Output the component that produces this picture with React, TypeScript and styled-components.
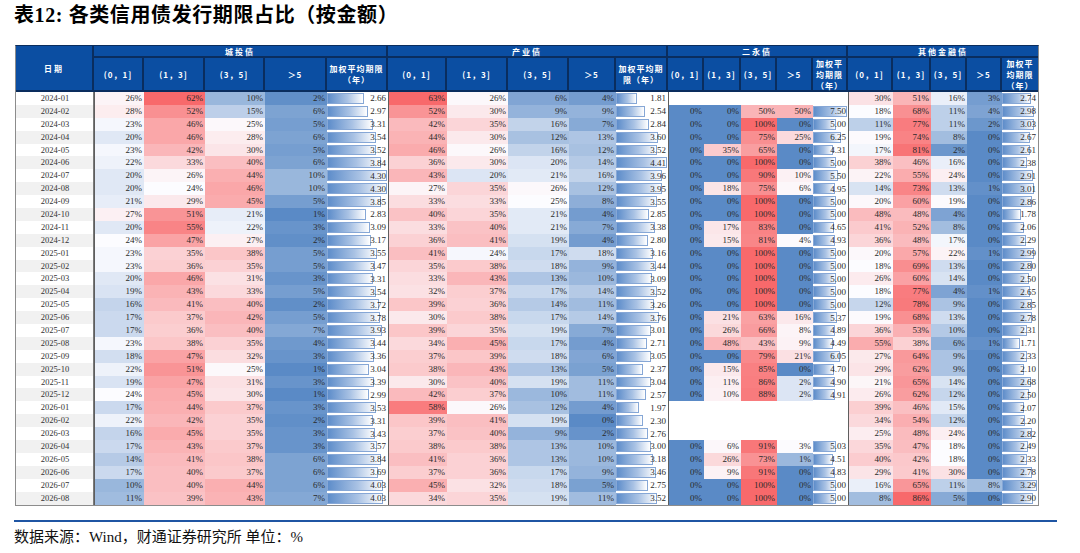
import React from 'react';
import styled, { createGlobalStyle } from 'styled-components';

const GlobalStyle = createGlobalStyle`
  html, body { margin: 0; padding: 0; background: #ffffff; }
  body { width: 1080px; height: 553px; overflow: hidden; font-family: "Liberation Serif", "Noto Sans CJK SC", serif; }
`;

type Vals = [number, number, number, number, string];
type Row = { date: string; c: Vals; p: Vals; e: Vals | null; o: Vals };

const raw = `
2024-01|26 62 10 2 2.66|63 26 6 4 1.81|-|30 51 16 3 2.74
2024-02|28 52 15 6 2.97|52 30 9 9 2.54|0 0 50 50 7.50|18 68 11 4 2.98
2024-03|23 46 25 5 3.31|42 35 16 7 2.84|0 0 100 0 5.00|11 77 11 2 3.03
2024-04|20 46 28 6 3.54|44 30 12 13 3.60|0 0 75 25 6.25|19 74 8 0 2.67
2024-05|23 42 30 5 3.52|46 26 16 12 3.52|0 35 65 0 4.31|17 81 2 0 2.61
2024-06|22 33 40 6 3.84|36 30 20 14 4.41|0 0 100 0 5.00|38 46 16 0 2.38
2024-07|20 26 44 10 4.30|43 20 21 16 3.96|0 0 90 10 5.50|22 55 24 0 2.91
2024-08|20 24 46 10 4.30|27 35 26 12 3.95|0 18 75 6 4.95|14 73 13 1 3.01
2024-09|21 29 45 5 3.85|33 33 25 8 3.55|0 0 100 0 5.00|20 60 19 0 2.86
2024-10|27 51 21 1 2.83|40 35 21 4 2.85|0 0 100 0 5.00|48 48 4 0 1.78
2024-11|20 55 22 3 3.09|33 40 21 7 3.38|0 17 83 0 4.65|41 52 8 0 2.06
2024-12|24 47 27 2 3.17|36 41 19 4 2.80|0 15 81 4 4.93|36 48 17 0 2.29
2025-01|23 35 38 5 3.55|41 24 17 18 3.16|0 0 100 0 5.00|20 57 22 1 2.99
2025-02|23 36 35 5 3.47|35 38 18 9 3.44|0 0 100 0 5.00|18 69 13 0 2.80
2025-03|20 46 31 3 3.31|33 43 13 10 3.09|0 0 100 0 5.00|26 60 14 0 2.50
2025-04|19 43 33 5 3.54|32 37 17 14 3.52|0 0 100 0 5.00|18 77 4 1 2.65
2025-05|16 41 40 2 3.72|39 36 14 11 3.26|0 0 100 0 5.00|12 78 9 0 2.85
2025-06|17 37 42 5 3.78|30 38 17 14 3.76|0 21 63 16 5.37|19 68 13 0 2.78
2025-07|17 36 40 7 3.93|39 35 19 7 3.01|0 26 66 8 4.89|36 53 10 0 2.31
2025-08|23 38 35 4 3.44|34 45 17 4 2.71|0 48 43 9 4.49|55 38 6 1 1.71
2025-09|18 47 32 3 3.36|37 39 18 6 3.05|0 0 79 21 6.05|27 64 9 0 2.33
2025-10|22 51 25 1 3.04|38 43 13 5 2.37|0 15 85 0 4.70|29 62 9 0 2.10
2025-11|19 47 31 3 3.39|30 40 19 11 3.04|0 11 86 2 4.90|21 65 14 0 2.68
2025-12|24 45 30 1 2.99|42 37 10 11 2.57|0 10 88 2 4.91|26 62 12 0 2.50
2026-01|17 44 37 3 3.53|58 26 12 4 1.97|-|39 46 15 0 2.07
2026-02|22 42 35 2 3.31|39 41 19 0 2.30|-|34 54 12 0 2.20
2026-03|16 45 35 3 3.43|37 40 9 2 2.76|-|25 48 24 0 2.82
2026-04|17 43 37 3 3.57|38 38 13 10 3.00|0 6 91 3 5.03|35 47 18 0 2.49
2026-05|14 41 38 6 3.84|41 36 13 10 3.18|0 26 73 1 4.51|40 42 18 0 2.33
2026-06|17 40 37 6 3.69|37 36 17 9 3.46|0 9 91 0 4.83|29 41 30 0 2.78
2026-07|10 40 44 6 4.03|45 32 18 5 2.75|0 0 100 0 5.00|16 65 11 8 3.29
2026-08|11 39 43 7 4.03|34 35 19 11 3.52|0 0 100 0 5.00|8 86 5 0 2.90
`;

const parse = (s: string): Vals | null => {
  if (s === '-') return null;
  const a = s.split(' ');
  return [Number(a[0]), Number(a[1]), Number(a[2]), Number(a[3]), a[4]];
};

const rows: Row[] = raw
  .trim()
  .split('\n')
  .map((line) => {
    const [date, c, p, e, o] = line.split('|');
    return { date, c: parse(c)!, p: parse(p)!, e: parse(e), o: parse(o)! };
  });

type Scale = { min: number; mid: number; max: number; barMax: number };

type GroupKey = 'c' | 'p' | 'e' | 'o';
const groups: { key: GroupKey; name: string; scale: Scale; avgLabel: string[] }[] = [
  { key: 'c', name: '城投债', scale: { min: 1, mid: 24, max: 62, barMax: 4.3 }, avgLabel: ['加权平均期限', '（年）'] },
  { key: 'p', name: '产业债', scale: { min: 0, mid: 25, max: 63, barMax: 4.41 }, avgLabel: ['加权平均期', '限（年）'] },
  { key: 'e', name: '二永债', scale: { min: 0, mid: 2.5, max: 100, barMax: 7.5 }, avgLabel: ['加权平', '均期限', '（年）'] },
  { key: 'o', name: '其他金融债', scale: { min: 0, mid: 18, max: 86, barMax: 3.29 }, avgLabel: ['加权平', '均期限', '（年）'] },
];

const BLUE = [90, 138, 198];
const WHITE = [252, 252, 255];
const RED = [248, 105, 107];

const mix = (a: number[], b: number[], t: number) =>
  `rgb(${a.map((v, i) => Math.round(v + (b[i] - v) * t)).join(',')})`;

const heat = (v: number, s: Scale) => {
  if (v <= s.mid) {
    const t = Math.min(1, (s.mid - v) / (s.mid - s.min));
    return mix(WHITE, BLUE, t);
  }
  const t = Math.min(1, (v - s.mid) / (s.max - s.mid));
  return mix(WHITE, RED, t);
};

const COLS = [
  78,
  50, 61, 60, 62, 61,
  59, 61, 61, 47, 52,
  36, 37, 36, 36, 35,
  45, 38, 36, 35, 36,
];

const Page = styled.div`
  width: 1080px;
  height: 553px;
  box-sizing: border-box;
  padding: 3px 0 0 14px;
  display: flex;
  flex-direction: column;
`;

const Title = styled.h1`
  margin: 0;
  font-family: "Liberation Serif", "Noto Sans CJK SC", serif;
  font-weight: 700;
  font-size: 20px;
  line-height: 24px;
  letter-spacing: 0.6px;
  color: #000;
`;

const Table = styled.div`
  margin: 18px 0 0 1px;
  width: ${COLS.reduce((a, b) => a + b, 0)}px;
  display: grid;
  grid-template-columns: ${COLS.map((c) => `${c}px`).join(' ')};
  grid-template-rows: 12px 34px repeat(32, 12.9px);
  border: 1px solid #8c8c8c;
  border-top-color: #0a2d5e;
`;

const HeadCell = styled.div<{ $span?: number; $rows?: number; $last?: boolean; $spacing?: number }>`
  grid-column: span ${(p) => p.$span ?? 1};
  grid-row: span ${(p) => p.$rows ?? 1};
  box-sizing: border-box;
  background: #0b4ea2;
  color: #ffffff;
  border-right: ${(p) => (p.$last ? 'none' : '2px solid #0a2d5e')};
  border-bottom: 2px solid #0a2d5e;
  display: flex;
  flex-direction: column;
  align-items: center;
  justify-content: center;
  font-family: "Noto Sans CJK SC", "Liberation Serif", sans-serif;
  font-weight: 700;
  font-size: 8px;
  line-height: 11px;
  letter-spacing: ${(p) => p.$spacing ?? 1}px;
  white-space: nowrap;
  text-align: center;
`;

const DateCell = styled.div<{ $odd: boolean }>`
  background: ${(p) => (p.$odd ? '#f1f1f1' : '#ffffff')};
  color: #333;
  font-family: "Liberation Serif", serif;
  font-size: 8.5px;
  line-height: 12.9px;
  text-align: center;
  box-shadow: inset -1px 0 0 #7a7a7a;
`;

const ValueCell = styled.div<{ $bg: string; $start?: boolean }>`
  background: ${(p) => p.$bg};
  color: #2a2a2a;
  font-family: "Liberation Serif", serif;
  font-size: 9px;
  line-height: 12.9px;
  text-align: right;
  padding-right: 2px;
  box-sizing: border-box;
  box-shadow: ${(p) => (p.$start ? 'inset 1px 0 0 #5e5e5e' : 'none')};
`;

const BarCell = styled.div`
  display: grid;
  align-items: center;
  background: #ffffff;
  padding: 1px 1px 1px 0;
  box-sizing: border-box;
  min-width: 0;
`;

const Bar = styled.div`
  grid-area: 1 / 1;
  justify-self: start;
  height: 100%;
  box-sizing: border-box;
  border: 1px solid #86a7d6;
  background: linear-gradient(90deg, #5e8dca 0%, #a9c2e4 55%, #ffffff 100%);
`;

const BarValue = styled.span`
  grid-area: 1 / 1;
  justify-self: end;
  color: #2a2a2a;
  font-family: "Liberation Serif", serif;
  font-size: 9px;
  line-height: 10px;
  padding-right: 1px;
`;

const Rule = styled.div`
  margin-top: 14px;
  width: 1043px;
  height: 2px;
  background: #1f55a3;
`;

const Source = styled.div`
  margin-top: 5px;
  font-family: "Liberation Serif", "Noto Sans CJK SC", serif;
  font-size: 15px;
  line-height: 20px;
  color: #111;
`;

const subLabels = ['(0，1]', '(1，3]', '(3，5]', '＞5'];

export default function App() {
  return (
    <>
      <GlobalStyle />
      <Page>
        <Title>表12: 各类信用债发行期限占比（按金额）</Title>
        <Table>
          <HeadCell $rows={2} $spacing={2}>日期</HeadCell>
          {groups.map((g, gi) => (
            <HeadCell key={g.key} $span={5} $last={gi === groups.length - 1} $spacing={2}>
              {g.name}
            </HeadCell>
          ))}
          {groups.map((g, gi) => (
            <React.Fragment key={`s-${g.key}`}>
              {subLabels.map((l) => (
                <HeadCell key={l}>{l}</HeadCell>
              ))}
              <HeadCell $last={gi === groups.length - 1}>
                {g.avgLabel.map((l) => (
                  <span key={l}>{l}</span>
                ))}
              </HeadCell>
            </React.Fragment>
          ))}
          {rows.map((r, ri) => (
            <React.Fragment key={r.date}>
              <DateCell $odd={ri % 2 === 1}>{r.date}</DateCell>
              {groups.map((g) => {
                const v = r[g.key];
                if (!v) {
                  return (
                    <React.Fragment key={g.key}>
                      {[0, 1, 2, 3].map((i) => (
                        <ValueCell key={i} $bg="#ffffff" $start={i === 0} />
                      ))}
                      <BarCell />
                    </React.Fragment>
                  );
                }
                return (
                  <React.Fragment key={g.key}>
                    {[0, 1, 2, 3].map((i) => (
                      <ValueCell key={i} $bg={heat(v[i] as number, g.scale)} $start={i === 0}>
                        {v[i]}%
                      </ValueCell>
                    ))}
                    <BarCell>
                      <Bar style={{ width: `${(Number(v[4]) / g.scale.barMax) * 100}%` }} />
                      <BarValue>{v[4]}</BarValue>
                    </BarCell>
                  </React.Fragment>
                );
              })}
            </React.Fragment>
          ))}
        </Table>
        <Rule />
        <Source>数据来源：Wind，财通证券研究所 单位：%</Source>
      </Page>
    </>
  );
}
